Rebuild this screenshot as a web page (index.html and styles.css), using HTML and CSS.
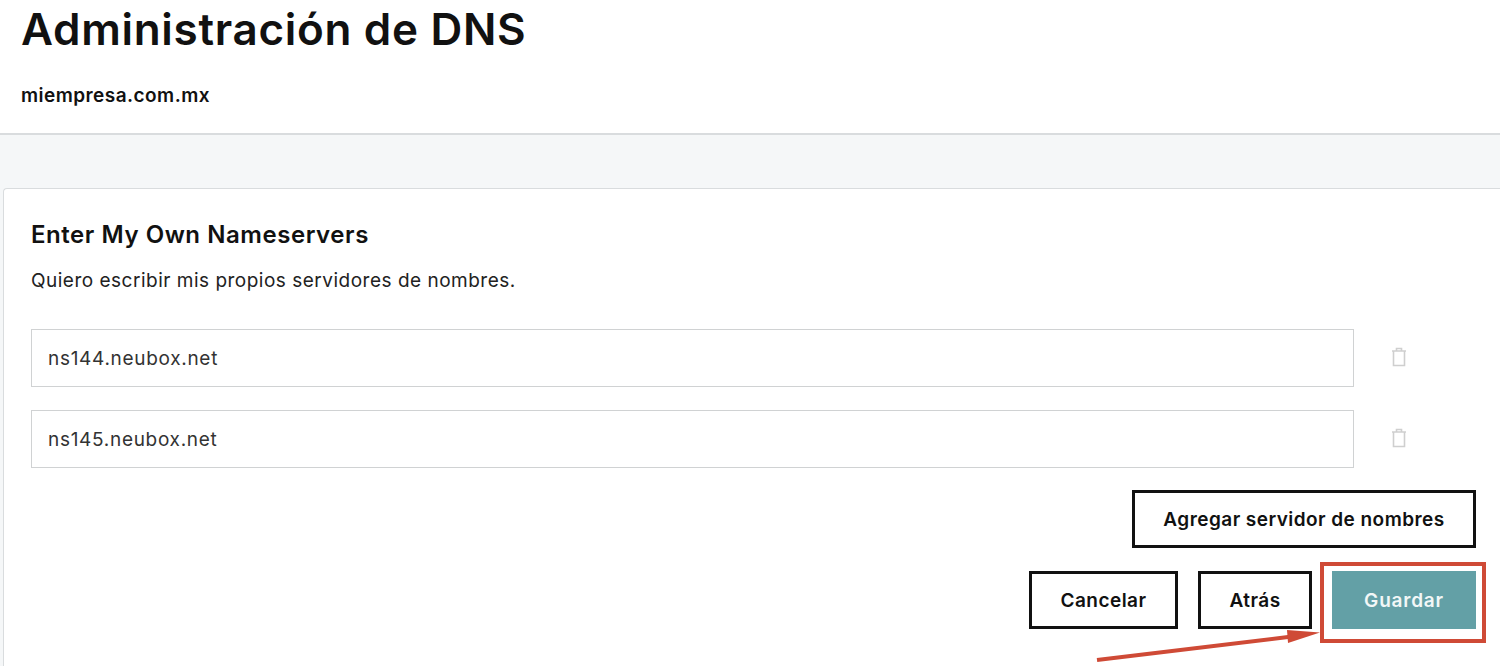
FILE: index.html
```html
<!DOCTYPE html>
<html lang="es">
<head>
  <meta charset="UTF-8">
  <title>Administración de DNS</title>
  <link rel="stylesheet" href="styles.css">
</head>
<body>

<header class="page-header">
  <h1>Administración de DNS</h1>
  <div class="domain">miempresa.com.mx</div>
</header>

<main class="page-body">
  <section class="card">
    <h2>Enter My Own Nameservers</h2>
    <p class="intro">Quiero escribir mis propios servidores de nombres.</p>

    <div class="ns-row">
      <input class="ns-input" type="text" value="ns144.neubox.net">
      <svg class="trash" viewBox="0 0 16 20" width="16" height="20" fill="none" stroke="#cfcfcf" stroke-width="1.6">
        <path d="M1 4H15M5.5 4V1.5H10.5V4M2.5 4V18.5H13.5V4"/>
      </svg>
    </div>
    <div class="ns-row">
      <input class="ns-input" type="text" value="ns145.neubox.net">
      <svg class="trash" viewBox="0 0 16 20" width="16" height="20" fill="none" stroke="#cfcfcf" stroke-width="1.6">
        <path d="M1 4H15M5.5 4V1.5H10.5V4M2.5 4V18.5H13.5V4"/>
      </svg>
    </div>

    <div class="add-row">
      <button class="btn btn-add">Agregar servidor de nombres</button>
    </div>
    <div class="action-row">
      <button class="btn btn-cancel">Cancelar</button>
      <button class="btn btn-back">Atrás</button>
      <div class="save-wrap">
        <button class="btn btn-save">Guardar</button>
        <div class="highlight"></div>
      </div>
    </div>
  </section>
</main>

<!-- flecha de la anotacion -->
<svg class="arrow" viewBox="0 0 1500 666" width="1500" height="666">
  <path d="M1097 660L1292 636.5" stroke="#cf4a36" stroke-width="4" fill="none"/>
  <path d="M1287 630L1320 632.5L1288 643Z" fill="#cf4a36"/>
</svg>

</body>
</html>
```

FILE: styles.css
```css
html, body {
  margin: 0;
  height: 666px;
  overflow: hidden;
}
body {
  font-family: "Inter", "Liberation Sans", sans-serif;
  color: #111;
  background-color: #f5f7f8;
  position: relative;
}
.page-header {
  height: 133px;
  background: #fff;
  border-bottom: 2px solid #d9dcde;
  padding-left: 21px;
}
.page-header h1 {
  margin: 0;
  padding-top: 3px;
  font-size: 44px;
  line-height: 52px;
  font-weight: 600;
  letter-spacing: 0.7px;
}
.domain {
  margin-top: 28px;
  font-size: 19px;
  line-height: 26px;
  font-weight: 600;
  letter-spacing: 0.45px;
}
.page-body {
  padding: 53px 0 0 3px;
}
.card {
  background: #fff;
  border: 1px solid #d9dcde;
  border-right: 0;
  border-bottom: 0;
  border-radius: 4px 0 0 0;
  padding: 29px 24px 0 27px;
  height: 478px;
  box-sizing: border-box;
}
.card h2 {
  margin: 0;
  font-size: 24px;
  line-height: 34px;
  font-weight: 600;
  letter-spacing: 0.55px;
}
.intro {
  margin: 16px 0 35px;
  font-size: 19px;
  line-height: 26px;
  letter-spacing: 0.5px;
  color: #222;
}
.ns-row {
  display: flex;
  align-items: center;
  margin-bottom: 22px;
}
.ns-row + .ns-row {
  margin-top: 23px;
}
.ns-input {
  flex: none;
  width: 1323px;
  height: 58px;
  box-sizing: border-box;
  border: 1px solid #d0d2d3;
  padding: 0 16px;
  font: inherit;
  font-size: 19px;
  letter-spacing: 0.7px;
  color: #333;
  background: #fff;
}
.trash {
  margin-left: 37px;
  margin-top: -2px;
}
.add-row {
  display: flex;
  justify-content: flex-end;
}
.action-row {
  display: flex;
  justify-content: flex-end;
  gap: 20px;
  margin-top: 23px;
}
.btn {
  height: 58px;
  box-sizing: border-box;
  border: 3px solid #111;
  background: #fff;
  color: #111;
  font: inherit;
  font-size: 19px;
  font-weight: 600;
  letter-spacing: 0.45px;
  padding: 0;
}
.btn-add { width: 344px; }
.btn-cancel { width: 149px; }
.btn-back { width: 114px; }
.btn-save {
  width: 144px;
  display: block;
  border: 0;
  background: #63a0a6;
  color: #f2f7f7;
  letter-spacing: 0.8px;
}
.save-wrap {
  position: relative;
}
.highlight {
  position: absolute;
  left: -12px;
  top: -9px;
  width: 166px;
  height: 81px;
  box-sizing: border-box;
  border: 4px solid #cf4a36;
}
.arrow {
  position: absolute;
  left: 0;
  top: 0;
  pointer-events: none;
}
```
